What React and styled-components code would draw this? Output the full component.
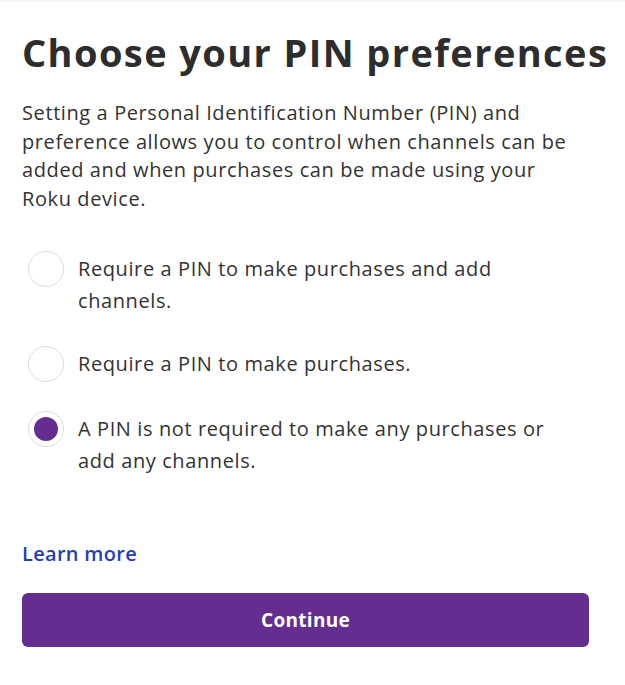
import styled, { createGlobalStyle } from "styled-components";

const GlobalStyle = createGlobalStyle`
  html, body {
    margin: 0;
    padding: 0;
    background: #ffffff;
  }
  body {
    font-family: "Open Sans", "Liberation Sans", sans-serif;
    color: #333333;
  }
`;

const Page = styled.div`
  width: 625px;
  min-height: 685px;
  box-sizing: border-box;
  border-top: 2px solid #f4f4f4;
  padding: 24px 36px 0 22px;
`;

const Content = styled.div`
  width: 567px;
`;

const Title = styled.h1`
  margin: 0;
  font-size: 38px;
  line-height: 52px;
  font-weight: 700;
  color: #2d2d2d;
  white-space: nowrap;
  letter-spacing: 1.4px;
`;

const Intro = styled.p`
  margin: 21px 0 0;
  font-size: 20px;
  line-height: 28.5px;
  letter-spacing: 0.6px;
  color: #333333;
`;

const Options = styled.div`
  display: flex;
  flex-direction: column;
  gap: 29px;
  margin-top: 38px;
  padding: 0 8px 0 6px;
`;

const Option = styled.label`
  display: flex;
  align-items: flex-start;
  gap: 14px;
  cursor: pointer;
`;

const Radio = styled.span`
  flex: none;
  width: 36px;
  height: 36px;
  box-sizing: border-box;
  border: 1px solid #dcdcdc;
  border-radius: 50%;
  display: flex;
  align-items: center;
  justify-content: center;

  &::after {
    content: "";
    width: 24px;
    height: 24px;
    border-radius: 50%;
    background: #662d91;
    display: ${(props) => (props.checked ? "block" : "none")};
  }
`;

const OptionText = styled.span`
  font-size: 20px;
  line-height: 32px;
  letter-spacing: 0.6px;
  padding-top: 2px;
  color: #333333;
`;

const LearnMore = styled.a`
  display: inline-block;
  margin-top: 64px;
  font-size: 20px;
  line-height: 26px;
  font-weight: 600;
  letter-spacing: 0.3px;
  color: #1f3fb2;
  text-decoration: none;
  cursor: pointer;
`;

const ContinueButton = styled.button`
  display: block;
  width: 567px;
  height: 54px;
  margin-top: 26px;
  border: none;
  border-radius: 6px;
  background: #662d91;
  color: #ffffff;
  font-family: inherit;
  font-size: 19px;
  font-weight: 700;
  letter-spacing: 0.3px;
  cursor: pointer;
`;

const options = [
  { id: "all", label: "Require a PIN to make purchases and add channels." },
  { id: "purchases", label: "Require a PIN to make purchases." },
  {
    id: "none",
    label: "A PIN is not required to make any purchases or add any channels.",
  },
];

const App = () => {
  const selected = "none";

  return (
    <>
      <GlobalStyle />
      <Page>
        <Content>
          <Title>Choose your PIN preferences</Title>
          <Intro>
            Setting a Personal Identification Number (PIN) and preference
            allows you to control when channels can be added and when
            purchases can be made using your Roku device.
          </Intro>
          <Options>
            {options.map((opt) => (
              <Option key={opt.id}>
                <Radio checked={selected === opt.id} />
                <OptionText>{opt.label}</OptionText>
              </Option>
            ))}
          </Options>
          <LearnMore>Learn more</LearnMore>
          <ContinueButton>Continue</ContinueButton>
        </Content>
      </Page>
    </>
  );
};

export default App;
